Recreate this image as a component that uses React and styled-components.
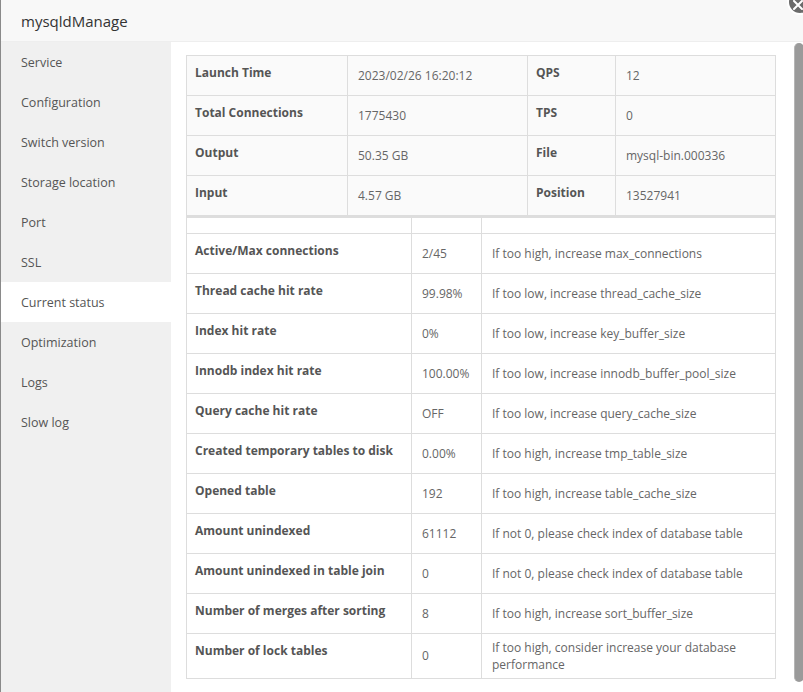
import React from "react";
import styled, { createGlobalStyle } from "styled-components";

const Global = createGlobalStyle`
  html, body { margin: 0; padding: 0; background: #fff; }
  body { font-family: "Open Sans", "Noto Sans", sans-serif; overflow: hidden; }
  * { box-sizing: border-box; }
`;

const Frame = styled.div`
  position: relative;
  width: 803px;
  height: 692px;
  display: flex;
  overflow: hidden;
`;

const Edge = styled.div`
  width: 1px;
  flex: none;
  background: #8a8a8a;
`;

const Dialog = styled.div`
  flex: 1;
  display: flex;
  flex-direction: column;
  background: #fff;
`;

const Header = styled.div`
  height: 42px;
  flex: none;
  background: #f8f8f8;
  border-bottom: 1px solid #eee;
  display: flex;
  align-items: center;
  padding-left: 20px;
  font-size: 15px;
  color: #333;
`;

const Body = styled.div`
  flex: 1;
  display: flex;
  min-height: 0;
`;

const Sidebar = styled.div`
  width: 170px;
  flex: none;
  background: #f0f0f0;
  display: flex;
  flex-direction: column;
`;

const NavItem = styled.div`
  height: 40px;
  display: flex;
  align-items: center;
  padding-left: 20px;
  font-size: 12.5px;
  color: #555;
  background: ${(p) => (p.$active ? "#fff" : "transparent")};
`;

const Content = styled.div`
  flex: 1;
  padding: 13px 15px 0 15px;
  display: flex;
  flex-direction: column;
`;

const Track = styled.div`
  width: 17px;
  flex: none;
  padding: 1px 2px 10px 3px;
  display: flex;
  flex-direction: column;
`;

const Thumb = styled.div`
  flex: 1;
  border-radius: 5px;
  background: #9a9a9a;
  border-left: 1px solid #b5b5b5;
  width: 10px;
`;

const Table = styled.table`
  width: 589px;
  border-collapse: collapse;
  table-layout: fixed;
  background: ${(p) => p.$bg};
  td {
    border: 1px solid #ddd;
    font-size: 12px;
    color: #666;
    padding: 5px 10px;
    vertical-align: middle;
    line-height: 17px;
  }
`;

const Label = styled.td`
  && {
    font-weight: 700;
    color: #555;
    vertical-align: top;
    padding-top: 8px;
    padding-left: 8px;
    font-size: 12px;
  }
`;

const Row = styled.tr`
  height: 40px;
`;

const Spacer = styled.tr`
  height: 16px;
  td { padding: 0; line-height: 0; }
`;

const TopTable = styled(Table)`
  border-bottom: 2px solid #ddd;
`;

const Close = styled.div`
  position: absolute;
  right: -10px;
  top: -11px;
  width: 26px;
  height: 26px;
  border-radius: 50%;
  background: #6b6b6b;
  border: 2px solid #fff;
  display: flex;
  align-items: center;
  justify-content: center;
`;

const nav = [
  "Service",
  "Configuration",
  "Switch version",
  "Storage location",
  "Port",
  "SSL",
  "Current status",
  "Optimization",
  "Logs",
  "Slow log",
];

const top = [
  ["Launch Time", "2023/02/26 16:20:12", "QPS", "12"],
  ["Total Connections", "1775430", "TPS", "0"],
  ["Output", "50.35 GB", "File", "mysql-bin.000336"],
  ["Input", "4.57 GB", "Position", "13527941"],
];

const stats = [
  ["Active/Max connections", "2/45", "If too high, increase max_connections"],
  ["Thread cache hit rate", "99.98%", "If too low, increase thread_cache_size"],
  ["Index hit rate", "0%", "If too low, increase key_buffer_size"],
  ["Innodb index hit rate", "100.00%", "If too low, increase innodb_buffer_pool_size"],
  ["Query cache hit rate", "OFF", "If too low, increase query_cache_size"],
  ["Created temporary tables to disk", "0.00%", "If too high, increase tmp_table_size"],
  ["Opened table", "192", "If too high, increase table_cache_size"],
  ["Amount unindexed", "61112", "If not 0, please check index of database table"],
  ["Amount unindexed in table join", "0", "If not 0, please check index of database table"],
  ["Number of merges after sorting", "8", "If too high, increase sort_buffer_size"],
  ["Number of lock tables", "0", "If too high, consider increase your database performance"],
];

export default function App() {
  return (
    <>
      <Global />
      <Frame>
        <Edge />
        <Dialog>
          <Header>mysqldManage</Header>
          <Body>
            <Sidebar>
              {nav.map((n) => (
                <NavItem key={n} $active={n === "Current status"}>
                  {n}
                </NavItem>
              ))}
            </Sidebar>
            <Content>
              <TopTable $bg="#fafafa">
                <colgroup>
                  <col style={{ width: 161 }} />
                  <col style={{ width: 180 }} />
                  <col style={{ width: 88 }} />
                  <col style={{ width: 160 }} />
                </colgroup>
                <tbody>
                  {top.map((r) => (
                    <Row key={r[0]}>
                      <Label>{r[0]}</Label>
                      <td>{r[1]}</td>
                      <Label>{r[2]}</Label>
                      <td>{r[3]}</td>
                    </Row>
                  ))}
                </tbody>
              </TopTable>
              <Table $bg="#fff">
                <colgroup>
                  <col style={{ width: 225 }} />
                  <col style={{ width: 70 }} />
                  <col style={{ width: 294 }} />
                </colgroup>
                <tbody>
                  <Spacer>
                    <td />
                    <td />
                    <td />
                  </Spacer>
                  {stats.map((r) => (
                    <Row key={r[0]}>
                      <Label>{r[0]}</Label>
                      <td>{r[1]}</td>
                      <td>{r[2]}</td>
                    </Row>
                  ))}
                </tbody>
              </Table>
            </Content>
            <Track>
              <Thumb />
            </Track>
          </Body>
        </Dialog>
        <Close>
          <svg width="12" height="12" viewBox="0 0 12 12" style={{ marginTop: 6, marginRight: 4 }}>
            <path d="M2 2 L10 10 M10 2 L2 10" stroke="#fff" strokeWidth="2" strokeLinecap="round" />
          </svg>
        </Close>
      </Frame>
    </>
  );
}
